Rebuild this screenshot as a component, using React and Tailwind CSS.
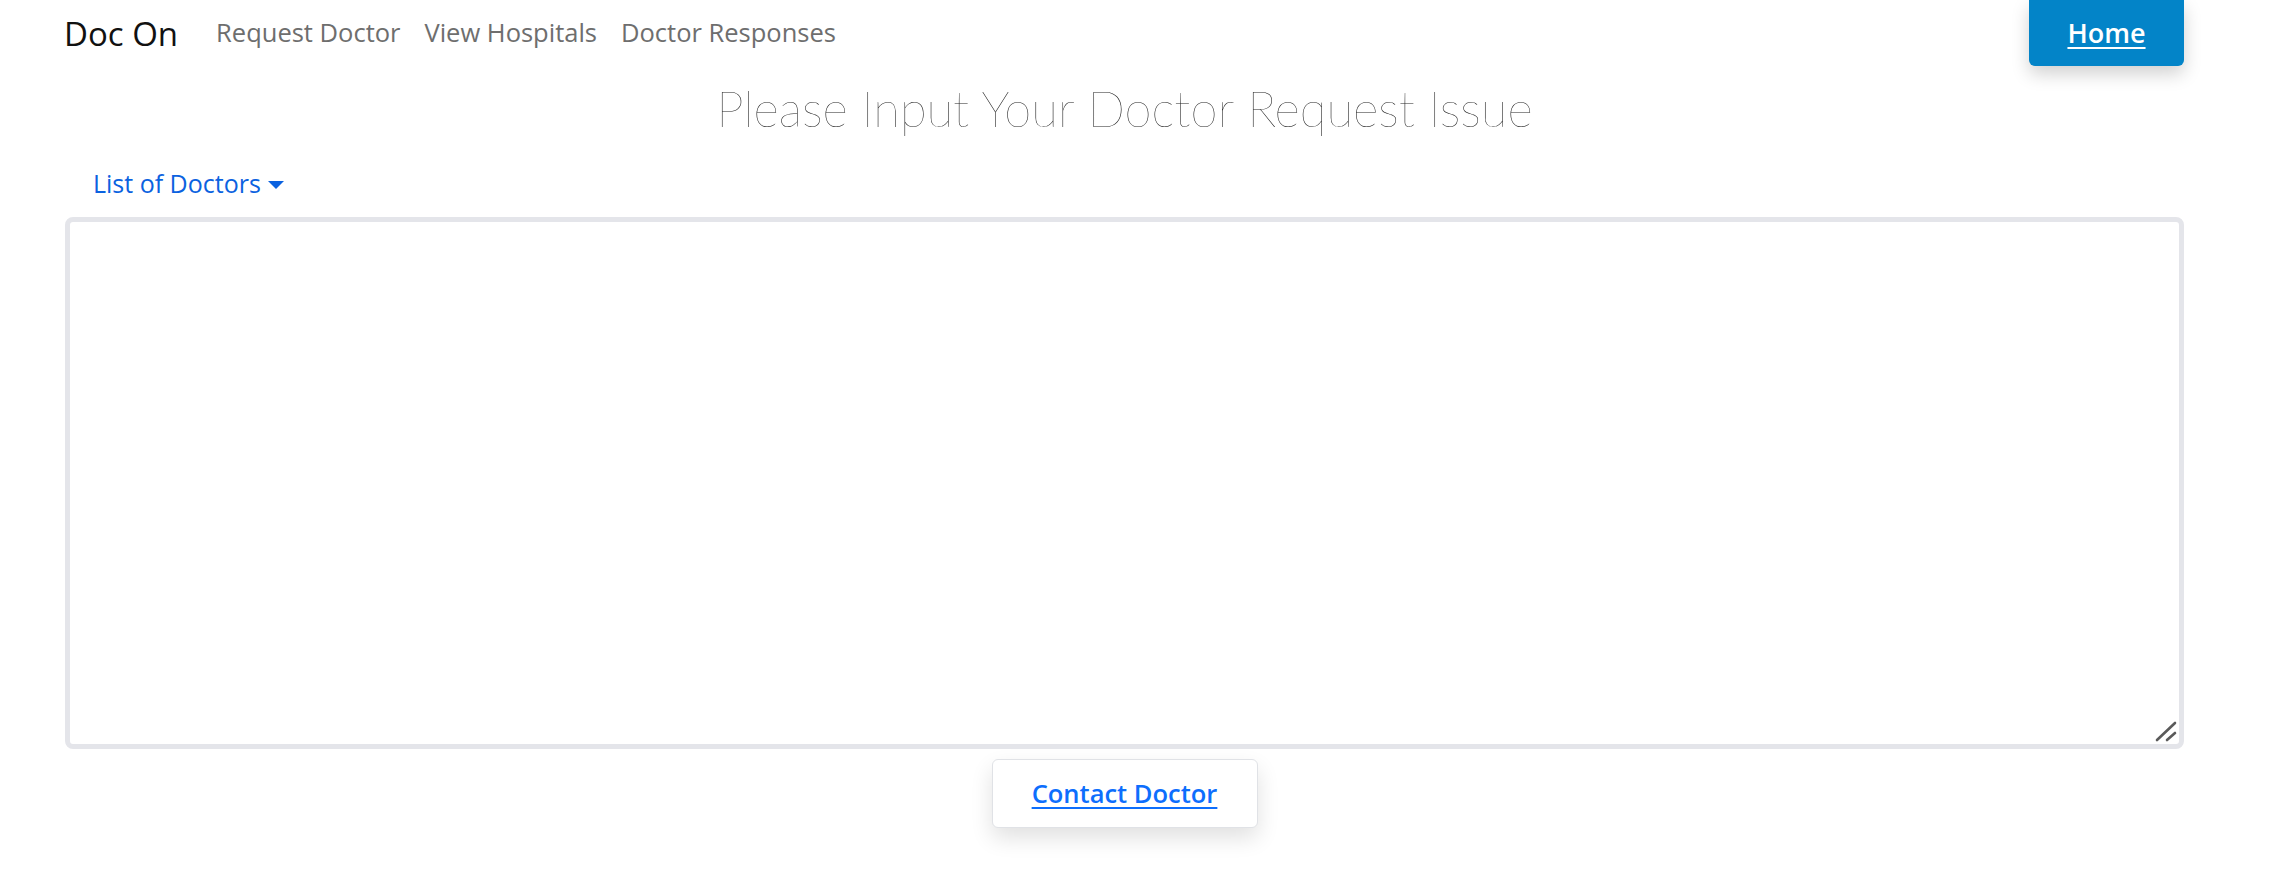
import React from "react";

export default function App() {
  return (
    <div className="min-h-[887px] w-full bg-white font-['Open_Sans',sans-serif]">
      <nav className="flex h-[66px] items-center pl-[64px] pr-[91px]">
        <span className="text-[33px] leading-none text-[#111111]">Doc On</span>
        <div className="ml-[38px] flex items-center gap-[24px] text-[25.5px] leading-none text-[#6e6e6e]">
          <a className="cursor-pointer">Request Doctor</a>
          <a className="cursor-pointer">View Hospitals</a>
          <a className="cursor-pointer">Doctor Responses</a>
        </div>
        <a className="ml-auto flex h-[66px] w-[155px] items-center justify-center rounded-b-[6px] bg-[#0384c8] text-[27px] font-semibold text-white underline underline-offset-[4px] shadow-[0_8px_18px_rgba(0,0,0,0.18)]">
          Home
        </a>
      </nav>

      <div className="pl-[65px] pr-[91px]">
        <h1 className="mt-[12px] text-center font-['Lato',sans-serif] text-[49px] font-extralight leading-[60px] text-[#222222]">
          Please Input Your Doctor Request Issue
        </h1>

        <div className="mt-[33px] flex items-center pl-[28px]">
          <button className="flex items-center gap-[7px] text-[25px] leading-none text-[#0b62e0]">
            List of Doctors
            <span className="mt-[2px] h-0 w-0 border-l-[8px] border-r-[8px] border-t-[8px] border-l-transparent border-r-transparent border-t-[#0b62e0]"></span>
          </button>
        </div>

        <div className="relative mt-[21px]">
          <textarea className="block h-[532px] w-full resize-none rounded-[8px] border-[5px] border-[#e4e5ea] bg-white outline-none"></textarea>
          <svg className="pointer-events-none absolute bottom-0 right-0" width="30" height="30" viewBox="0 0 30 30">
            <line x1="3" y1="21" x2="21" y2="4" stroke="#5a5a5a" strokeWidth="2.6" strokeLinecap="round" />
            <line x1="13" y1="21" x2="21" y2="14" stroke="#5a5a5a" strokeWidth="2.6" strokeLinecap="round" />
          </svg>
        </div>

        <div className="mt-[10px] flex justify-center">
          <button className="flex h-[69px] w-[266px] items-center justify-center rounded-[6px] border border-[#e0e2e6] bg-white text-[25.5px] font-semibold text-[#0d6efd] underline underline-offset-[4px] shadow-[0_10px_22px_rgba(0,0,0,0.12)]">
            Contact Doctor
          </button>
        </div>
      </div>
    </div>
  );
}
